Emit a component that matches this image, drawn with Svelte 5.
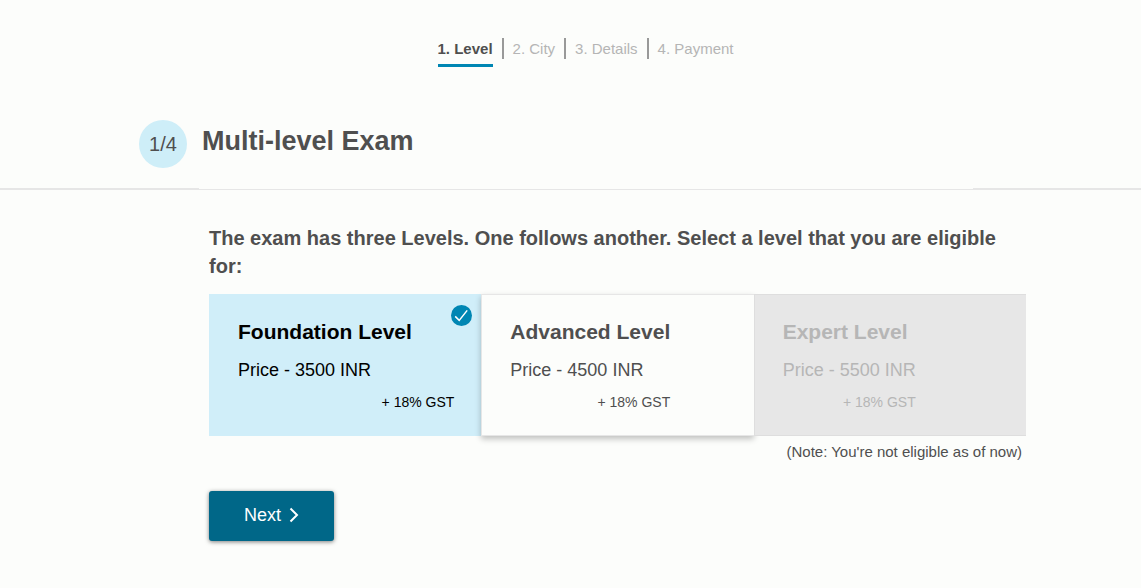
<script>
  const steps = ['Level', 'City', 'Details', 'Payment'];
  const levels = [
    { id: 'foundation', name: 'Foundation Level', price: 3500, eligible: true },
    { id: 'advanced', name: 'Advanced Level', price: 4500, eligible: true },
    { id: 'expert', name: 'Expert Level', price: 5500, eligible: false }
  ];
  let selected = $state('foundation');
</script>

<div class="page">
  <nav aria-label="Registration steps">
    <ol class="steps">
      {#each steps as step, i}
        <li class:current={i === 0} aria-current={i === 0 ? 'step' : undefined}>
          <span>{i + 1}. {step}</span>
        </li>
      {/each}
    </ol>
  </nav>

  <header class="heading">
    <span class="count">1/4</span>
    <h1>Multi-level Exam</h1>
  </header>

  <div class="divider"><i class="side"></i><i class="middle"></i><i class="side"></i></div>

  <main>
    <fieldset>
      <legend>The exam has three Levels. One follows another. Select a level that you are eligible for:</legend>
      <div class="levels">
        {#each levels as level}
          <label class="card" class:selected={selected === level.id} class:disabled={!level.eligible}>
            <input type="radio" name="level" value={level.id} disabled={!level.eligible} bind:group={selected} />
            <span class="info">
              <strong>{level.name}</strong>
              <span class="price">Price - {level.price} INR</span>
              <small>+ 18% GST</small>
            </span>
            {#if selected === level.id}
              <svg class="tick" viewBox="0 0 21 21" aria-hidden="true">
                <circle cx="10.5" cy="10.5" r="10.5" />
                <path d="M4.2 11.4 8.2 15.4 16.2 5.4" />
              </svg>
            {/if}
          </label>
        {/each}
      </div>
    </fieldset>
    <p class="note">(Note: You're not eligible as of now)</p>
    <button type="button">
      Next
      <svg viewBox="0 0 10 16" aria-hidden="true"><path d="M1.5 1.5 8 8 1.5 14.5" /></svg>
    </button>
  </main>
</div>

<style>
  :global(body) {
    background: #fcfdfb;
  }
  .page {
    padding-top: 38px;
    color: #4f4f4f;
    font-family: "Liberation Sans", Arial, sans-serif;
  }
  nav,
  .divider {
    padding-left: 31px;
  }
  .steps {
    display: flex;
    justify-content: center;
    margin: 0;
    padding: 0;
    list-style: none;
    font-size: 15px;
    line-height: 21px;
    color: #b5b5b5;
  }
  .steps li {
    height: 21px;
    padding: 0 9px 0 8px;
    border-left: 2px solid #999;
  }
  .steps li + li {
    padding-left: 9px;
  }
  .steps li:first-child {
    border: 0;
  }
  .steps span {
    display: block;
  }
  .current span {
    padding-bottom: 5px;
    border-bottom: 3px solid #0086b3;
    font-weight: bold;
    color: #4f4f4f;
  }
  .heading {
    display: flex;
    gap: 15px;
    box-sizing: border-box;
    max-width: 925px;
    margin: 61px auto 20px;
    padding-left: 31px;
  }
  .count {
    width: 48px;
    border-radius: 50%;
    background: #ceeef8;
    font-size: 20px;
    line-height: 48px;
    text-align: center;
  }
  h1 {
    margin: 0;
    font-size: 27px;
    line-height: 43px;
  }
  .divider {
    display: flex;
    align-items: flex-end;
  }
  .side {
    flex: 1;
    height: 2px;
    background: #e6e6e6;
  }
  .side:first-child {
    margin-left: -31px;
    flex-basis: 31px;
  }
  .middle {
    width: 774px;
    height: 1px;
    background: #e6e6e6;
  }
  main {
    box-sizing: border-box;
    max-width: 925px;
    margin: 0 auto;
    padding: 34px 7px 40px 101px;
  }
  fieldset {
    min-width: 0;
    margin: 0;
    padding: 0;
    border: 0;
  }
  legend {
    padding: 0 0 14px;
    font-size: 20px;
    font-weight: bold;
    line-height: 28px;
  }
  .levels {
    display: grid;
    grid-template-columns: repeat(3, 1fr);
  }
  .card {
    position: relative;
    display: flex;
    box-sizing: border-box;
    padding: 23px 27px 19px 28px;
    border: 1px solid #e6e6e6;
    border-right: 0;
    background: #fcfdfb;
    box-shadow: 0 3px 6px rgba(0, 0, 0, 0.24);
    cursor: pointer;
  }
  .card input {
    position: absolute;
    margin: 0;
    opacity: 0;
  }
  .card.selected {
    border-color: #d0eef9;
    background: #d0eef9;
    box-shadow: none;
    color: #000;
  }
  .card.disabled {
    border-color: #dedede;
    background: #e7e7e7;
    box-shadow: none;
    color: #b6b6b6;
    cursor: default;
  }
  .info {
    display: flex;
    flex-direction: column;
  }
  .selected .info {
    flex: 1;
  }
  strong {
    font-size: 21px;
    line-height: 28px;
  }
  .price {
    margin-top: 12px;
    font-size: 18px;
    line-height: 24px;
  }
  small {
    margin-top: 10px;
    padding-bottom: 4px;
    font-size: 14px;
    line-height: 20px;
    text-align: right;
  }
  .tick {
    position: absolute;
    top: 10px;
    right: 9px;
    width: 21px;
  }
  .tick circle {
    fill: #0086b3;
  }
  .tick path {
    fill: none;
    stroke: #fff;
    stroke-width: 1.5;
  }
  .note {
    margin: 6px 4px 29px 0;
    font-size: 15px;
    line-height: 20px;
    text-align: right;
  }
  button {
    display: flex;
    align-items: center;
    justify-content: center;
    gap: 8px;
    width: 125px;
    height: 50px;
    padding: 0 0 2px;
    border: 0;
    border-radius: 3px;
    background: #006788;
    box-shadow: 0 1px 4px rgba(0, 0, 0, 0.5);
    color: #fff;
    font-family: inherit;
    font-size: 18px;
    cursor: pointer;
  }
  button svg {
    width: 10px;
    height: 16px;
  }
  button path {
    fill: none;
    stroke: #fff;
    stroke-width: 2;
  }
</style>
